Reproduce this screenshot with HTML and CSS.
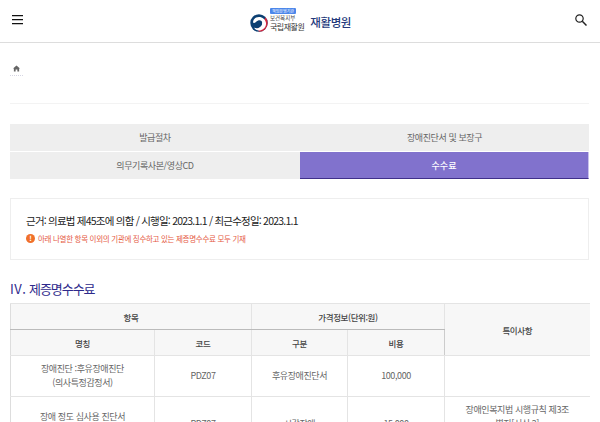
FILE: index.html
```html
<!DOCTYPE html>
<html lang="ko">
<head>
<meta charset="utf-8">
<title>제증명수수료</title>
<link rel="stylesheet" href="styles.css">
</head>
<body>
<header class="header">
  <button class="icon-btn" aria-label="메뉴">
    <svg width="12" height="10" viewBox="0 0 12 10"><path d="M0 .6h11M0 4.600h11M0 8.600h11" stroke="#111" stroke-width="1.100" fill="none"/></svg>
  </button>
  <div class="logo">
    <svg class="emblem" width="18" height="18" viewBox="0 0 18 18">
      <circle cx="9" cy="9" r="8.700" fill="#0b3f72"/>
      <path d="M9 17.700A8.700 8.700 0 0 0 17.700 9 8.700 8.700 0 0 0 15.500 3.300L13 8c0 4-2 6-6 6z" fill="#d3283f"/>
      <path d="M3 8.500C3 5 6 3 9 3c3.500 0 6.500 2.500 7 6 .3 3.500-2 7-6 7.500-3 .3-5-1-6-3 2 1.200 4.500 1 6-.5 1.500-1.500 3-4 1.500-6C10 5.500 7.500 6.500 6.500 7.500 5.500 8.500 4 9.500 3 8.500z" fill="#fff"/>
      <path d="M5.500 9.500c1.500 0 2-1.500 3.500-2 1.500-.5 3 .5 3 2 0 2-1.500 3.300-3 3.300-2 0-3.500-1.500-3.500-3.300z" fill="#0b3f72"/>
    </svg>
    <div class="logo-text">
      <span class="logo-badge">책임운영기관</span>
      <span class="logo-sub">보건복지부</span>
      <span class="logo-main">국립재활원</span>
    </div>
    <span class="logo-title">재활병원</span>
  </div>
  <button class="icon-btn" aria-label="검색">
    <svg width="12" height="12" viewBox="0 0 12 12"><circle cx="4.500" cy="4.500" r="3.700" fill="none" stroke="#222" stroke-width="1.200"/><path d="M7.300 7.300L11.500 11.500" stroke="#222" stroke-width="1.500"/></svg>
  </button>
</header>
<main class="main">
  <nav class="crumb">
    <svg class="crumb-home" width="7" height="7" viewBox="0 0 8 8"><path d="M4 .5L8 4H7v3.500H5V5H3v2.500H1V4H0z" fill="#666"/></svg>
    <span class="crumb-line"></span>
  </nav>
  <div class="tabs">
    <a class="tab">발급절차</a>
    <a class="tab">장애진단서 및 보장구</a>
    <a class="tab">의무기록사본/영상CD</a>
    <a class="tab tab-active">수수료</a>
  </div>
  <section class="notice">
    <p class="notice-main">근거: 의료법 제45조에 의함 / 시행일: 2023.1.1 / 최근수정일: 2023.1.1</p>
    <p class="notice-warn"><span class="warn-icon">!</span>아래 나열한 항목 이외의 기관에 징수하고 있는 제증명수수료 모두 기재</p>
  </section>
  <h2 class="title"><span class="title-num">IV.</span> 제증명수수료</h2>
  <table class="fees">
    <colgroup><col class="c1"><col class="c2"><col class="c3"><col class="c4"><col class="c5"></colgroup>
    <thead>
      <tr class="r-head"><th colspan="2">항목</th><th colspan="2">가격정보(단위:원)</th><th rowspan="2">특이사항</th></tr>
      <tr class="r-head r-head2"><th>명칭</th><th>코드</th><th>구분</th><th>비용</th></tr>
    </thead>
    <tbody>
      <tr class="r-body"><td>장애진단 :후유장애진단<br>(의사특정감정서)</td><td>PDZ07</td><td>후유장애진단서</td><td>100,000</td><td></td></tr>
      <tr class="r-body r-tall"><td>장애 정도 심사용 진단서<br>(시각장애)</td><td>PDZ07</td><td>시각장애</td><td>15,000</td><td>장애인복지법 시행규칙 제3조<br>별지[서식 2]<br>장애정도심사용진단서</td></tr>
    </tbody>
  </table>
</main>
</body>
</html>
```
FILE: styles.css
```css
* { box-sizing: border-box; }
html, body { margin: 0; height: 422px; overflow: hidden; background: #fff; }
body { font-family: "Noto Sans CJK KR", "Noto Sans", sans-serif; color: #555; font-size: 10px; }
.header { height: 43px; border-bottom: 1px solid #ddd; display: flex; align-items: center; justify-content: space-between; padding: 0 13px 3px 12px; position: relative; }
.icon-btn { background: none; border: 0; padding: 0; display: flex; }
.logo { position: absolute; left: 250px; top: 8px; display: flex; align-items: flex-start; height: 27px; }
.emblem { margin-top: 6px; }
.logo-text { display: flex; flex-direction: column; align-items: flex-start; margin-left: 2px; line-height: 1; }
.logo-badge { background: #4b86ea; color: #fff; font-size: 4px; width: 26px; height: 6px; line-height: 6px; text-align: center; border-radius: 1px; white-space: nowrap; overflow: hidden; }
.logo-sub { font-size: 5.500px; color: #444; margin-top: 1px; line-height: 7px; white-space: nowrap; }
.logo-main { font-size: 8px; color: #333; line-height: 10px; white-space: nowrap; letter-spacing: -.5px; }
.logo-title { font-size: 11.500px; font-weight: 500; color: #243a7c; margin-left: 6px; margin-top: 6px; line-height: 16px; white-space: nowrap; letter-spacing: -.4px; }
.main { padding: 0 11px 0 10px; }
.crumb { height: 61px; border-bottom: 1px solid #f3f3f3; padding-top: 22px; display: flex; flex-direction: column; align-items: flex-start; }
.crumb-home { margin-left: 3px; }
.crumb-line { width: 13px; margin-top: 3px; border-top: 1px dotted #d6d6e4; }
.tabs { display: grid; grid-template-columns: 290px 289px; grid-auto-rows: 27px; row-gap: 1px; margin-top: 20px; }
.tab { background: #eee; display: flex; align-items: center; justify-content: center; font-size: 9px; color: #666; letter-spacing: -.4px; }
.tab-active { background: #8172cd; color: #fff; font-weight: 500; letter-spacing: 0; border-bottom: 1px solid #3f2f8a; border-right: 1px solid #c9c2ec; }
.notice { margin-top: 19px; height: 62px; border: 1px solid #eee; padding: 14px 15px 0; }
.notice p { margin: 0; }
.notice-main { font-size: 10.500px; line-height: 15px; color: #222; letter-spacing: -.78px; white-space: nowrap; }
.notice-warn { display: flex; align-items: center; font-size: 7.500px; color: #e5593f; line-height: 11px; margin-top: 5px !important; white-space: nowrap; letter-spacing: -.3px; }
.warn-icon { width: 9px; height: 9px; border-radius: 50%; background: #f0702a; color: #fff; font-size: 7px; line-height: 9px; text-align: center; font-weight: 700; margin-right: 3px; letter-spacing: 0; }
.title { margin: 20px 0 5px; font-size: 13px; font-weight: 400; line-height: 18px; color: #2e2a8c; white-space: nowrap; letter-spacing: -1.050px; }
.title-num { letter-spacing: .5px; }
.fees { width: 579px; table-layout: fixed; border-collapse: collapse; border-top: 1px solid #aaa; }
.c1 { width: 144px; } .c2 { width: 97px; } .c3 { width: 96px; } .c4 { width: 97px; } .c5 { width: 145px; }
.fees th, .fees td { border: 1px solid #e4e4e4; padding: 0; text-align: center; font-size: 9px; letter-spacing: -.4px; overflow: hidden; }
.fees th { background: #f7f7f7; color: #444; font-weight: 500; font-size: 8.500px; }
.fees td { color: #666; line-height: 14px; }
.r-head { height: 26px; }
.r-head th[colspan] { border-bottom-color: #bbb; }
.r-body { height: 41px; }
.r-tall { height: 54px; }
.fees th:first-child, .fees td:first-child { border-left-color: #ddd; }
.fees th:last-child, .fees td:last-child { border-right: 0; }
.fees tr > :nth-child(5), .fees th[rowspan] { border-left-color: #ccc; }
```
